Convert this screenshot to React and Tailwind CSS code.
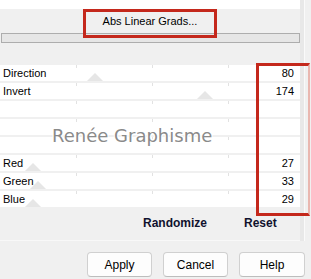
const rows = [
  { label: 'Direction', value: '80', thumb: 95 },
  { label: 'Invert', value: '174', thumb: 205 },
  { label: '', value: '', thumb: null },
  { label: '', value: '', thumb: null },
  { label: '', value: '', thumb: null },
  { label: 'Red', value: '27', thumb: 33 },
  { label: 'Green', value: '33', thumb: 38 },
  { label: 'Blue', value: '29', thumb: 33 },
];

function SliderRow({ label, value, thumb }) {
  return (
    <div className="relative flex h-[16px] items-center justify-between bg-white pl-[3px] pr-[6px] text-[11px] leading-[16px] text-black">
      {/* tick marks */}
      <span className="absolute left-[76px] top-0 h-[3px] w-px bg-[#e2e2e2]" />
      <span className="absolute left-[152px] top-0 h-[3px] w-px bg-[#e2e2e2]" />
      <span className="absolute left-[228px] top-0 h-[3px] w-px bg-[#e2e2e2]" />
      {thumb !== null && (
        <svg
          className="absolute bottom-0"
          style={{ left: thumb - 8 }}
          width="16"
          height="8"
          viewBox="0 0 16 8"
        >
          <polygon points="0,8 8,0 16,8" fill="#e6e6e6" />
        </svg>
      )}
      <span className="relative">{label}</span>
      <span className="relative">{value}</span>
    </div>
  );
}

export default function App() {
  return (
    <div className="relative h-[279px] w-[311px] overflow-hidden bg-[#f0f0f0] font-['Liberation_Sans',Arial,sans-serif]">
      <div className="flex">
        <div className="h-[241px] w-[300px] border-b border-[#f8f8f8]">
          <div className="h-[9px] bg-white" />
          <div className="flex h-[24px] items-center justify-center text-[11px] text-black">
            Abs Linear Grads...
          </div>
          <div className="ml-px h-[10px] w-[299px] border border-[#adadad] bg-[#e6e6e6]" />
          <div className="h-[22px]" />
          <div className="flex flex-col gap-[2px]">
            {rows.map((r, i) => (
              <SliderRow key={i} {...r} />
            ))}
          </div>
          <div className="flex pt-[9px] text-[12px] font-bold leading-[14px] text-[#10122e]">
            <span className="ml-[143px]">Randomize</span>
            <span className="ml-[37px]">Reset</span>
          </div>
        </div>
        <div className="h-[241px] w-[4px] bg-[#e8e8e8]" />
        <div className="h-[241px] w-px bg-[#fafafa]" />
        <div className="h-[241px] flex-1 bg-[#f0f0f0]" />
      </div>

      <div className="mt-[11px] flex justify-end gap-[11px] pr-[6px] text-[12px] text-black">
        <button className="h-[25px] w-[65px] rounded-[4px] border border-[#d0d0d0] border-b-[#bdbdbd] bg-[#fdfdfd]">
          Apply
        </button>
        <button className="h-[25px] w-[65px] rounded-[4px] border border-[#d0d0d0] border-b-[#bdbdbd] bg-[#fdfdfd]">
          Cancel
        </button>
        <button className="h-[25px] w-[66px] rounded-[4px] border border-[#d0d0d0] border-b-[#bdbdbd] bg-[#fdfdfd]">
          Help
        </button>
      </div>

      {/* watermark */}
      <div className="pointer-events-none absolute left-[52px] top-[125px] font-['DejaVu_Sans',sans-serif] text-[18px] leading-[22px] text-[#8a8a8a] [text-shadow:1px_1px_0_#ffffff,-1px_-1px_0_#ffffff,1px_-1px_0_#ffffff,-1px_1px_0_#ffffff]">
        Renée Graphisme
      </div>

      {/* annotation boxes */}
      <div className="pointer-events-none absolute left-[83px] top-[9px] h-[29px] w-[134px] border-[3px] border-[#c4281c]" />
      <div className="pointer-events-none absolute left-[256px] top-[63px] h-[153px] w-[54px] border-[3px] border-r-[2px] border-[#c4281c] border-r-[#e9b7b0]" />
    </div>
  );
}
